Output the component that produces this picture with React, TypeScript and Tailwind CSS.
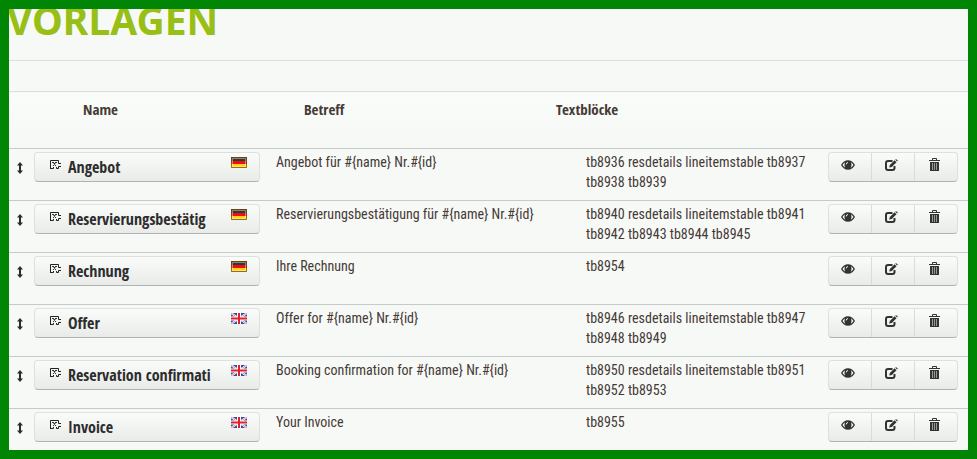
import type { ReactNode } from "react";

type Lang = "de" | "en";

const templates: { name: string; lang: Lang; subject: string; blocks: string }[] = [
  {
    name: "Angebot",
    lang: "de",
    subject: "Angebot für #{name} Nr.#{id}",
    blocks: "tb8936 resdetails lineitemstable tb8937 tb8938 tb8939",
  },
  {
    name: "Reservierungsbestätig",
    lang: "de",
    subject: "Reservierungsbestätigung für #{name} Nr.#{id}",
    blocks: "tb8940 resdetails lineitemstable tb8941 tb8942 tb8943 tb8944 tb8945",
  },
  { name: "Rechnung", lang: "de", subject: "Ihre Rechnung", blocks: "tb8954" },
  {
    name: "Offer",
    lang: "en",
    subject: "Offer for #{name} Nr.#{id}",
    blocks: "tb8946 resdetails lineitemstable tb8947 tb8948 tb8949",
  },
  {
    name: "Reservation confirmati",
    lang: "en",
    subject: "Booking confirmation for #{name} Nr.#{id}",
    blocks: "tb8950 resdetails lineitemstable tb8951 tb8952 tb8953",
  },
  { name: "Invoice", lang: "en", subject: "Your Invoice", blocks: "tb8955" },
];

function MoveIcon() {
  return (
    <svg width="6" height="12" viewBox="0 0 6 12" fill="#2b2b2b" aria-hidden="true">
      <path d="M3 0 6 3.4H4V8.6H6L3 12 0 8.6H2V3.4H0Z" />
    </svg>
  );
}

function BlockIcon() {
  return (
    <svg width="12" height="10" viewBox="0 0 12 10" fill="none" stroke="#222" aria-hidden="true">
      <path d="M.5 9V.5H8.5V3.5H11M0 8.5H3.5V7M6.5 7V8.5H8.5V6.5H11" />
      <path d="M2 2.5H4M5 2.5H7M3 6 4.5 4.5 6 6M3.5 3.5H5.5" stroke="#333" />
    </svg>
  );
}

function EyeIcon() {
  return (
    <svg width="14" height="10" viewBox="0 0 14 10" aria-hidden="true">
      <path d="M0 5C1.6 2 4.1.3 7 .3S12.4 2 14 5C12.4 8 9.9 9.7 7 9.7S1.6 8 0 5Z" fill="#333" />
      <path d="M1.5 5C2.2 3.7 3 2.8 4 2.2 3.3 4 3.3 6 4.3 7.7 3.1 7.1 2.2 6.2 1.5 5ZM12.5 5C11.8 3.7 11 2.8 10 2.2 10.7 4 10.7 6 9.7 7.7 10.9 7.1 11.8 6.2 12.5 5Z" fill="#f5f6f5" />
      <path d="M5.2 4.4Q5.3 2.7 7 2.5" fill="none" stroke="#f5f6f5" />
    </svg>
  );
}

function EditIcon() {
  return (
    <svg width="13" height="12" viewBox="0 0 13 12" fill="none" aria-hidden="true">
      <path d="M7.5 2H3Q1 2 1 4V9Q1 11 3 11H7.5Q9.5 11 9.5 9V7" stroke="#333" strokeWidth="2" />
      <path d="M4.2 8.6 4.8 6 9.6 1.3 11.5 3.2 6.8 8Z" fill="#333" />
      <path d="M10.3.7 11 0 12.9 1.8 12.2 2.5Z" fill="#333" />
    </svg>
  );
}

function TrashIcon() {
  return (
    <svg width="11" height="14" viewBox="0 0 11 14" fill="none" aria-hidden="true">
      <path d="M3.5 2V.5H7.5V2M0 2.5H11" stroke="#333" />
      <path d="M1 4H10V13H1Z" fill="#333" />
      <path d="M3.5 5V12M5.5 5V12M7.5 5V12" stroke="#999" />
    </svg>
  );
}

function Flag({ lang }: { lang: Lang }) {
  if (lang === "de") {
    return (
      <svg width="16" height="11" viewBox="0 0 16 11" role="img" aria-label="Deutsch">
        <path d="M0 0H16V4H0Z" fill="#3a342e" />
        <path d="M0 4H16V7H0Z" fill="#e81010" />
        <path d="M0 7H16V11H0Z" fill="#ffd21a" />
        <path d="M1.5 1.5H14.5V9.5H1.5Z" fill="none" stroke="#fff" strokeOpacity=".4" />
        <path d="M.5.5H15.5V10.5H.5Z" fill="none" stroke="#7a4a12" strokeOpacity=".75" />
      </svg>
    );
  }
  return (
    <svg width="16" height="11" viewBox="0 0 16 11" role="img" aria-label="English">
      <path d="M0 0H16V11H0Z" fill="#2f4ca3" />
      <path d="M0 0 16 11M16 0 0 11" stroke="#fff" strokeWidth="2" />
      <path d="M0 0 16 11M16 0 0 11" stroke="#e05a62" strokeWidth=".7" />
      <path d="M8 0V11M0 5.5H16" stroke="#fff" strokeWidth="4" />
      <path d="M8 0V11M0 5.5H16" stroke="#e0202c" strokeWidth="2" />
    </svg>
  );
}

function ActionButton({ label, children }: { label: string; children: ReactNode }) {
  return (
    <button
      type="button"
      aria-label={label}
      className="flex h-7 flex-1 items-center justify-center border-l border-[#d9dcda] pr-1 pb-1 first:border-l-0"
    >
      {children}
    </button>
  );
}

export default function App() {
  return (
    <main className="h-screen overflow-hidden border-[9px] border-[#008505] bg-[#f7f9f7] font-['Open_Sans_Condensed','Lato',sans-serif] text-[#453a35]">
      <h1 className="-mt-2 -ml-0.5 h-[60px] border-b border-[#dcdfdd] font-['Noto_Sans',sans-serif] text-[39px] leading-[38px] font-bold text-[#98bf15]">
        VORLAGEN
      </h1>

      <table className="mt-[30px] w-full table-fixed text-left text-sm leading-5">
        <colgroup>
          <col className="w-[25px]" />
          <col className="w-[242px]" />
          <col className="w-[280px]" />
          <col className="w-[30px]" />
          <col />
          <col className="w-[140px]" />
        </colgroup>
        <thead className="text-[15px]">
          <tr className="h-[57px] border-t border-[#dcdfdd] bg-linear-to-b from-[#fafcfa] to-[#f6f8f6] align-top">
            <td />
            <th scope="col" className="pt-[7px] pl-[49px]">Name</th>
            <th scope="col" className="pt-[7px] pl-7">Betreff</th>
            <th scope="col" colSpan={2} className="pt-[7px]">Textblöcke</th>
            <td />
          </tr>
        </thead>
        <tbody className="font-['Roboto_Condensed','Lato',sans-serif]">
          {templates.map((t) => (
            <tr key={t.name} className="h-[52px] border-t border-[#c6cac8] align-top">
              <td className="pt-[13px] pl-2">
                <MoveIcon />
              </td>
              <td className="pt-[3px] pr-4">
                <button
                  type="button"
                  className="flex h-[30px] w-full items-start rounded border border-[#dde0de] border-b-[#afb3b1] bg-linear-to-b from-[#fafcfa] to-[#e9ebe9] pr-3 pl-[15px] text-left font-['Open_Sans_Condensed','Lato',sans-serif] text-base leading-7 font-bold text-[#2d2d2d]"
                >
                  <span className="pt-[7px]">
                    <BlockIcon />
                  </span>
                  <span className="flex-1 pl-1.5 whitespace-nowrap">{t.name}</span>
                  <span className="pt-1">
                    <Flag lang={t.lang} />
                  </span>
                </button>
              </td>
              <td colSpan={2} className="pt-[3px]">{t.subject}</td>
              <td className="pt-[3px]">{t.blocks}</td>
              <td className="pt-[3px] pr-[10px]">
                <div className="flex h-[30px] rounded border border-[#dde0de] border-b-[#afb3b1] bg-linear-to-b from-[#fafcfa] to-[#e9ebe9]">
                  <ActionButton label="Vorschau">
                    <EyeIcon />
                  </ActionButton>
                  <ActionButton label="Bearbeiten">
                    <EditIcon />
                  </ActionButton>
                  <ActionButton label="Löschen">
                    <TrashIcon />
                  </ActionButton>
                </div>
              </td>
            </tr>
          ))}
        </tbody>
      </table>
    </main>
  );
}
